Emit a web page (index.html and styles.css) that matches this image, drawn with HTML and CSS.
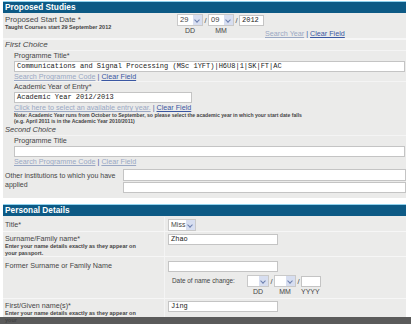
FILE: index.html
```html
<!DOCTYPE html>
<html>
<head>
<meta charset="utf-8">
<link rel="stylesheet" href="styles.css">
</head>
<body>
<div class="page">
  <div class="head">Proposed Studies</div>
  <div class="panel">
    <div class="row date-row">
      <div class="lbl">
        <div>Proposed Start Date *</div>
        <div class="tiny">Taught Courses start 29 September 2012</div>
      </div>
      <div class="date">
        <div class="dfield">
          <div class="dline"><span class="sel s26">29<i class="arr"></i></span><span class="sl">/</span></div>
          <div class="cap">DD</div>
        </div>
        <div class="dfield">
          <div class="dline"><span class="sel s26">09<i class="arr"></i></span><span class="sl">/</span></div>
          <div class="cap">MM</div>
        </div>
        <div class="dfield">
          <div class="dline"><span class="inp w24 mono">2012</span></div>
          <div class="cap">&nbsp;</div>
        </div>
        <div class="links yearlinks"><span class="faded">Search Year</span> | <span class="lnk">Clear Field</span></div>
      </div>
    </div>
    <div class="sep"></div>
    <div class="choice">
      <div class="it">First Choice</div>
      <div class="sub">
        <div class="fl">Programme Title*</div>
        <div class="inp full mono">Communications and Signal Processing (MSc 1YFT)|H6U8|1|SK|FT|AC</div>
        <div class="links"><span class="faded">Search Programme Code</span> | <span class="lnk">Clear Field</span></div>
        <div class="fl">Academic Year of Entry*</div>
        <div class="inp w178 mono">Academic Year 2012/2013</div>
        <div class="links"><span class="faded">Click here to select an available entry year.</span> | <span class="lnk">Clear Field</span></div>
        <div class="tiny note">Note: Academic Year runs from October to September, so please select the academic year in which your start date falls</div>
        <div class="tiny note">(e.g. April 2011 is in the Academic Year 2010/2011)</div>
      </div>
      <div class="it it2">Second Choice</div>
      <div class="sub">
        <div class="fl">Programme Title</div>
        <div class="inp full mono">&nbsp;</div>
        <div class="links"><span class="faded">Search Programme Code</span> | <span class="faded">Clear Field</span></div>
      </div>
    </div>
    <div class="other">
      <div class="olbl">Other institutions to which you have applied</div>
      <div class="ofields">
        <div class="inp ofull">&nbsp;</div>
        <div class="inp ofull">&nbsp;</div>
      </div>
    </div>
  </div>
  <div class="gap"></div>
  <div class="head">Personal Details</div>
  <div class="panel pd">
    <div class="prow r-title">
      <div class="pl">Title*</div>
      <div class="pf"><span class="sel s28">Miss<i class="arr"></i></span></div>
    </div>
    <div class="prow r-sur">
      <div class="pl">
        <div>Surname/Family name*</div>
        <div class="tiny">Enter your name details exactly as they appear on your passport.</div>
      </div>
      <div class="pf"><span class="inp w110 mono">Zhao</span></div>
    </div>
    <div class="prow r-former">
      <div class="pl">Former Surname or Family Name</div>
      <div class="pf">
        <span class="inp w110">&nbsp;</span>
        <div class="dnc">
          <span class="dnclbl">Date of name change:</span>
          <div class="dfield">
            <div class="dline"><span class="sel s22">&nbsp;<i class="arr"></i></span><span class="sl">/</span></div>
            <div class="cap">DD</div>
          </div>
          <div class="dfield">
            <div class="dline"><span class="sel s22">&nbsp;<i class="arr"></i></span><span class="sl">/</span></div>
            <div class="cap">MM</div>
          </div>
          <div class="dfield">
            <div class="dline"><span class="inp w20">&nbsp;</span></div>
            <div class="cap">YYYY</div>
          </div>
        </div>
      </div>
    </div>
    <div class="prow r-first">
      <div class="pl">
        <div>First/Given name(s)*</div>
        <div class="tiny">Enter your name details exactly as they appear on your</div>
      </div>
      <div class="pf"><span class="inp w110 mono">Jing</span></div>
    </div>
  </div>
  <div class="bottom"></div>
</div>
</body>
</html>
```

FILE: styles.css
```css
* { box-sizing: border-box; }
html, body { margin: 0; padding: 0; }
body {
  background: #ffffff;
  font-family: "Liberation Sans", Arial, sans-serif;
  font-size: 7.2px;
  color: #454545;
  width: 411px;
  height: 324px;
  overflow: hidden;
}
.page {
  width: 403px;
  margin-left: 3px;
  padding-top: 1px;
}
.head {
  height: 12px;
  line-height: 11px;
  background: #0d5a85;
  border-top: 1px solid #8fd2ee;
  color: #ffffff;
  font-weight: bold;
  font-size: 8.3px;
  padding-left: 2px;
}
.panel { background: #ebebea; }
.row { display: flex; }
.date-row { height: 25px; padding: 1px 0 0 2px; }
.date-row .lbl { width: 172px; flex-shrink: 0; padding-top: 1px; font-size: 7.8px; line-height: 9px; }
.tiny { font-size: 5.5px; line-height: 6.5px; color: #444; }
.date-row .tiny { font-weight: bold; }
.date { display: flex; align-items: flex-start; }
.dfield { display: flex; flex-direction: column; }
.dline { display: flex; align-items: center; height: 12px; }
.sl { width: 5px; text-align: center; font-size: 7.5px; }
.cap { text-align: center; font-size: 7px; line-height: 9px; padding-right: 5px; }
.sel {
  position: relative;
  display: inline-block;
  height: 12px;
  line-height: 10px;
  background: #fff;
  border: 1px solid #c9c9c9;
  padding-left: 2px;
  font-size: 7.5px;
}
.arr {
  position: absolute;
  right: 0;
  top: 0;
  width: 9px;
  height: 10px;
  background: #d7def0;
}
.arr::after {
  content: "";
  position: absolute;
  left: 2px;
  top: 3px;
  width: 3px;
  height: 3px;
  border-right: 1.2px solid #6c7fae;
  border-bottom: 1.2px solid #6c7fae;
  transform: rotate(45deg);
}
.s26 { width: 26px; }
.s28 { width: 28px; font-size: 7px; }
.s22 { width: 22px; }
.inp {
  display: block;
  height: 11px;
  line-height: 9px;
  background: #fff;
  border: 1px solid #c4c4c4;
  padding-left: 2px;
  font-size: 7.5px;
  color: #222;
  white-space: nowrap;
  overflow: hidden;
}
.mono { font-family: "Liberation Mono", "Courier New", monospace; font-size: 7px; }
.w24 { width: 25px; }
.w20 { width: 20px; }
.w110 { width: 110px; }
.w178 { width: 178px; }
.yearlinks { padding-top: 15px; margin-left: 1px; }
.links { font-size: 7.2px; line-height: 9px; color: #3a55a0; }
.faded { color: #9aa8c4; text-decoration: underline; }
.lnk { color: #3a57a2; text-decoration: underline; }
.sep { height: 2px; background: #f6f6f6; }
.choice { padding: 0 0 0 2px; }
.it { font-style: italic; font-size: 8px; line-height: 10px; }
.it2 { margin-top: 1px; font-size: 7.5px; }
.sub { padding-left: 9px; }
.fl { font-size: 7.2px; line-height: 10px; border-top: 1px solid #f4f4f4; }
.full { width: 391px; }
.note { font-weight: bold; font-size: 5.1px; line-height: 6px; }
.other { display: flex; padding: 3px 0 5px 2px; }
.olbl { width: 118px; flex-shrink: 0; font-size: 7px; line-height: 9px; padding-top: 2px; padding-right: 2px; }
.ofields { display: flex; flex-direction: column; gap: 1px; }
.ofull { width: 283px; height: 11.5px; }
.gap { height: 6px; background: #fff; }
.pd { padding-top: 1px; }
.prow { display: flex; border-bottom: 1px solid #f6f6f6; }
.pl { width: 162px; flex-shrink: 0; padding-left: 2px; font-size: 7.2px; line-height: 9px; border-right: 1px solid #f4f4f4; }
.pf { padding-left: 3px; }
.r-title { height: 15px; }
.r-title .pl { padding-top: 3px; }
.r-title .pf { padding-top: 2px; }
.r-sur { height: 25px; }
.r-sur .pl { padding-top: 2px; }
.r-sur .pf { padding-top: 2px; }
.r-sur .tiny, .r-first .tiny { font-weight: bold; width: 135px; }
.r-former { height: 42px; }
.r-former .pl { padding-top: 4px; }
.r-former .pf { padding-top: 4px; }
.dnc { display: flex; align-items: flex-start; margin-top: 3px; padding-left: 4px; }
.dnclbl { font-size: 6.4px; line-height: 12px; width: 75px; flex-shrink: 0; white-space: nowrap; }
.r-first { height: 18px; border-bottom: none; }
.r-first .pl { padding-top: 2px; }
.r-first .pf { padding-top: 2px; }
.bottom { height: 8px; background: #5b5b5b; margin-left: -3px; width: 411px; }
```
